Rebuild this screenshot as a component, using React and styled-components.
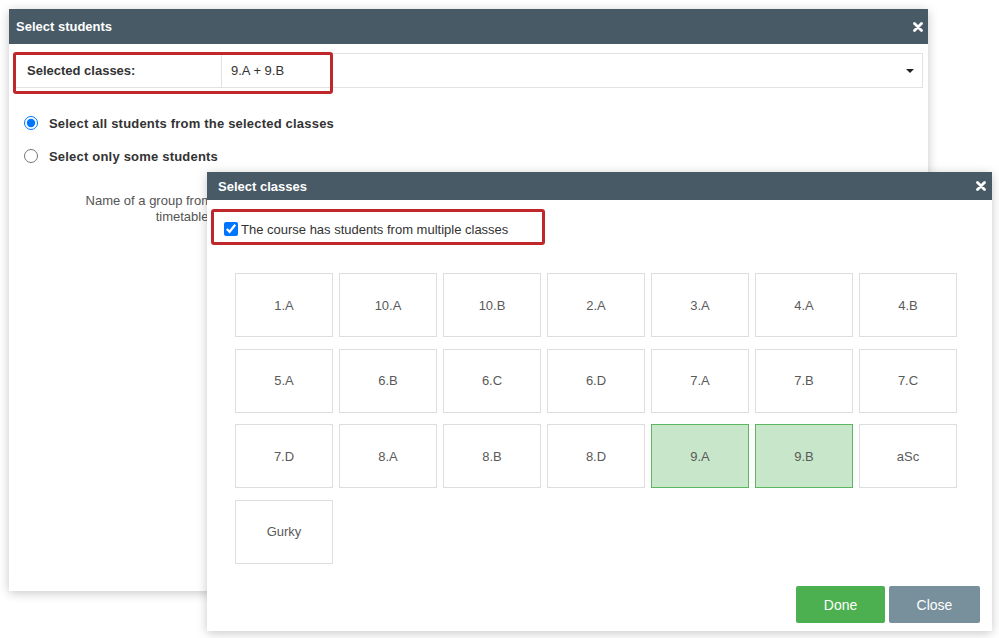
import React, { useState } from "react";
import styled, { createGlobalStyle } from "styled-components";

const GlobalStyle = createGlobalStyle`
  html, body {
    margin: 0;
    padding: 0;
    background: #ffffff;
  }
  body {
    font-family: "Liberation Sans", Arial, sans-serif;
    font-size: 13px;
    color: #333;
  }
`;

const CLASSES = [
  "1.A", "10.A", "10.B", "2.A", "3.A", "4.A", "4.B",
  "5.A", "6.B", "6.C", "6.D", "7.A", "7.B", "7.C",
  "7.D", "8.A", "8.B", "8.D", "9.A", "9.B", "aSc",
  "Gurky",
];

function CloseIcon() {
  return (
    <svg width="10" height="10" viewBox="0 0 10 10">
      <path d="M1.5 1.5 L8.5 8.5 M8.5 1.5 L1.5 8.5" stroke="#fff" strokeWidth="2.8" strokeLinecap="round" />
    </svg>
  );
}

export default function App() {
  const [selected, setSelected] = useState(["9.A", "9.B"]);
  const [mode, setMode] = useState("all");
  const [multiple, setMultiple] = useState(true);

  const toggle = (name) => {
    setSelected((prev) =>
      prev.includes(name) ? prev.filter((c) => c !== name) : [...prev, name]
    );
  };

  return (
    <>
      <GlobalStyle />
      <Desktop>
        <StudentsWindow>
          <Header>
            <Title>Select students</Title>
            <CloseButton>
              <CloseIcon />
            </CloseButton>
          </Header>
          <StudentsBody>
            <SelectRow>
              <SelectLabel>Selected classes:</SelectLabel>
              <SelectValue>
                <span>{selected.join(" + ")}</span>
                <Caret />
              </SelectValue>
              <Highlight $w={320} $h={42} />
            </SelectRow>
            <RadioList>
              <RadioRow>
                <Radio
                  type="radio"
                  name="mode"
                  checked={mode === "all"}
                  onChange={() => setMode("all")}
                />
                Select all students from the selected classes
              </RadioRow>
              <RadioRow>
                <Radio
                  type="radio"
                  name="mode"
                  checked={mode === "some"}
                  onChange={() => setMode("some")}
                />
                Select only some students
              </RadioRow>
            </RadioList>
            <GroupLabel>Name of a group from timetable:</GroupLabel>
          </StudentsBody>
        </StudentsWindow>

        <ClassesWindow>
          <Header $small>
            <Title>Select classes</Title>
            <CloseButton>
              <CloseIcon />
            </CloseButton>
          </Header>
          <ClassesBody>
            <CheckRow>
              <Check
                type="checkbox"
                checked={multiple}
                onChange={() => setMultiple(!multiple)}
              />
              The course has students from multiple classes
              <Highlight $w={334} $h={36} />
            </CheckRow>
            <Grid>
              {CLASSES.map((c) => (
                <Tile key={c} $active={selected.includes(c)} onClick={() => toggle(c)}>
                  {c}
                </Tile>
              ))}
            </Grid>
            <Footer>
              <Button $color="#4caf50" $w={89}>Done</Button>
              <Button $color="#78909c" $w={91}>Close</Button>
            </Footer>
          </ClassesBody>
        </ClassesWindow>
      </Desktop>
    </>
  );
}

const Desktop = styled.div`
  position: relative;
  width: 999px;
  height: 638px;
  overflow: hidden;
`;

const Window = styled.div`
  position: absolute;
  background: #fff;
  display: flex;
  flex-direction: column;
  box-shadow: 0 2px 10px rgba(0, 0, 0, 0.22);
`;

const StudentsWindow = styled(Window)`
  left: 9px;
  top: 9px;
  width: 919px;
  height: 582px;
`;

const ClassesWindow = styled(Window)`
  left: 207px;
  top: 172px;
  width: 785px;
  height: 459px;
`;

const Header = styled.div`
  height: ${(p) => (p.$small ? "28px" : "35px")};
  flex-shrink: 0;
  background: #475a66;
  display: flex;
  align-items: center;
  justify-content: space-between;
  padding: 0 ${(p) => (p.$small ? "6px" : "5px")} 0 ${(p) => (p.$small ? "11px" : "7px")};
`;

const Title = styled.div`
  color: #fff;
  font-weight: bold;
  font-size: 13px;
`;

const CloseButton = styled.div`
  display: flex;
  align-items: center;
`;

const StudentsBody = styled.div`
  padding: 9px 5px 0 5px;
  display: flex;
  flex-direction: column;
`;

const SelectRow = styled.div`
  position: relative;
  height: 35px;
  border: 1px solid #e2e2e2;
  box-sizing: border-box;
  display: flex;
  align-items: stretch;
`;

const SelectLabel = styled.div`
  width: 206px;
  box-sizing: border-box;
  padding-left: 12px;
  display: flex;
  align-items: center;
  font-weight: bold;
  font-size: 13px;
  color: #333;
`;

const SelectValue = styled.div`
  flex: 1;
  border-left: 1px solid #e2e2e2;
  padding: 0 8px 0 9px;
  display: flex;
  align-items: center;
  justify-content: space-between;
  font-size: 13px;
  color: #333;
`;

const Caret = styled.span`
  width: 0;
  height: 0;
  border-left: 4px solid transparent;
  border-right: 4px solid transparent;
  border-top: 4px solid #222;
  margin-top: 1px;
`;

const Highlight = styled.div`
  position: absolute;
  left: -2px;
  top: -2px;
  width: ${(p) => p.$w}px;
  height: ${(p) => p.$h}px;
  box-sizing: border-box;
  border: 3px solid #c0272d;
  border-radius: 3px;
  pointer-events: none;
`;

const RadioList = styled.div`
  display: flex;
  flex-direction: column;
  gap: 11px;
  padding: 24px 0 0 10px;
`;

const RadioRow = styled.label`
  display: flex;
  align-items: center;
  height: 22px;
  font-weight: bold;
  font-size: 13px;
  letter-spacing: 0.2px;
  color: #333;
`;

const Radio = styled.input`
  width: 14px;
  height: 14px;
  margin: 0 11px 0 0;
  accent-color: #0075ff;
`;

const GroupLabel = styled.div`
  width: 142px;
  margin: 26px 0 0 56px;
  text-align: right;
  color: #555;
  font-size: 13px;
  line-height: 16px;
`;

const ClassesBody = styled.div`
  flex: 1;
  display: flex;
  flex-direction: column;
  padding: 11px 12px 8px 4px;
`;

const CheckRow = styled.label`
  position: relative;
  height: 36px;
  display: flex;
  align-items: center;
  padding-left: 11px;
  font-size: 13px;
  color: #333;
  margin-left: 2px;
`;

const Check = styled.input`
  width: 14px;
  height: 14px;
  margin: 0 3px 0 0;
  accent-color: #0075ff;
`;

const Grid = styled.div`
  display: grid;
  grid-template-columns: repeat(7, 98px);
  grid-auto-rows: 64px;
  column-gap: 6px;
  row-gap: 11.5px;
  margin: 26px 0 0 24px;
`;

const Tile = styled.div`
  box-sizing: border-box;
  border: 1px solid ${(p) => (p.$active ? "#5cb860" : "#dedede")};
  background: ${(p) => (p.$active ? "#c8e6c9" : "#fff")};
  display: flex;
  align-items: center;
  justify-content: center;
  color: #5a5a5a;
  font-size: 13px;
  cursor: pointer;
`;

const Footer = styled.div`
  margin-top: auto;
  display: flex;
  justify-content: flex-end;
  gap: 4px;
`;

const Button = styled.button`
  width: ${(p) => p.$w}px;
  height: 37px;
  border: none;
  border-radius: 2px;
  background: ${(p) => p.$color};
  color: #fff;
  font-family: "Liberation Sans", Arial, sans-serif;
  font-size: 14px;
  cursor: pointer;
`;
